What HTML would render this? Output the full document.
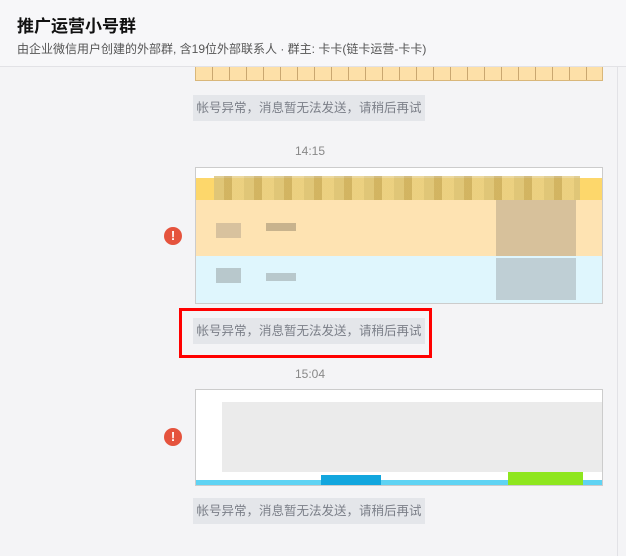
<!DOCTYPE html><html><head><meta charset="utf-8"><style>
body{margin:0;width:626px;height:556px;background:#f4f4f6;font-family:"Liberation Sans","Noto Sans CJK SC",sans-serif;position:relative;overflow:hidden}
.h{position:absolute;left:0;top:0;width:626px;height:66px;background:#f7f7f9;border-bottom:1px solid #e2e2e6}
.t{position:absolute;left:17px;top:12px;font-size:17px;font-weight:bold;color:#111}
.s{position:absolute;left:17px;top:40px;font-size:12px;color:#555}
.b{position:absolute;left:193px;width:232px;height:26px;background:#e4e6ea;color:#7b7f88;font-size:12.5px;line-height:26px;text-align:center;white-space:nowrap}
.tm{position:absolute;font-size:12px;color:#888}
.e{position:absolute;left:164px;width:18px;height:18px;border-radius:50%;background:#e5533d;color:#fff;font-weight:bold;font-size:13px;line-height:18px;text-align:center}
.img{position:absolute;left:195px;width:406px;border:1px solid #ccc;overflow:hidden}
</style></head><body>
<div class="h"><div class="t">推广运营小号群</div><div class="s">由企业微信用户创建的外部群, 含19位外部联系人 · 群主: 卡卡(链卡运营-卡卡)</div></div>
<div style="position:absolute;left:195px;top:67px;width:406px;height:13px;background:#fde0a8;border:1px solid #d9b77a;border-top:0;background-image:repeating-linear-gradient(90deg,transparent 0 16px,#c9a770 16px 17px)"></div>
<div class="b" style="top:95px">帐号异常，消息暂无法发送，请稍后再试</div>
<div class="tm" style="left:295px;top:144px">14:15</div>
<div class="img" style="top:167px;height:135px;background:#fff">
<div style="position:absolute;left:0;top:10px;width:406px;height:22px;background:#fdd76b"></div>
<div style="position:absolute;left:18px;top:8px;width:366px;height:24px;background:repeating-linear-gradient(90deg,#d9c27a 0 10px,#c8ac5f 10px 18px,#e7cf86 18px 30px);opacity:.8"></div>
<div style="position:absolute;left:0;top:32px;width:406px;height:56px;background:#fee3b2"></div>
<div style="position:absolute;left:0;top:88px;width:406px;height:47px;background:#dff6fd"></div>
<div style="position:absolute;left:300px;top:32px;width:80px;height:56px;background:#cdb895;opacity:.8"></div>
<div style="position:absolute;left:300px;top:90px;width:80px;height:42px;background:#b6c6cb;opacity:.8"></div>
<div style="position:absolute;left:20px;top:55px;width:25px;height:15px;background:#d8c29e"></div>
<div style="position:absolute;left:70px;top:55px;width:30px;height:8px;background:#c8b38d"></div>
<div style="position:absolute;left:20px;top:100px;width:25px;height:15px;background:#b8c8cc"></div>
<div style="position:absolute;left:70px;top:105px;width:30px;height:8px;background:#b8c8cc"></div>
</div>
<div class="e" style="top:227px">!</div>
<div style="position:absolute;left:179px;top:308px;width:247px;height:44px;border:3px solid #f00"></div>
<div class="b" style="top:318px">帐号异常，消息暂无法发送，请稍后再试</div>
<div class="tm" style="left:295px;top:367px">15:04</div>
<div class="img" style="top:389px;height:95px;background:#fff">
<div style="position:absolute;left:26px;top:12px;width:380px;height:70px;background:#e6e6e6;opacity:.8"></div>
<div style="position:absolute;left:0;top:90px;width:406px;height:5px;background:#5fd3f3"></div>
<div style="position:absolute;left:312px;top:82px;width:75px;height:13px;background:#8ee61e"></div>
<div style="position:absolute;left:125px;top:85px;width:60px;height:10px;background:#12a6de"></div>
</div>
<div class="e" style="top:428px">!</div>
<div class="b" style="top:498px">帐号异常，消息暂无法发送，请稍后再试</div>
<div style="position:absolute;left:617px;top:67px;width:1px;height:489px;background:#e2e2e6"></div>
</body></html>
